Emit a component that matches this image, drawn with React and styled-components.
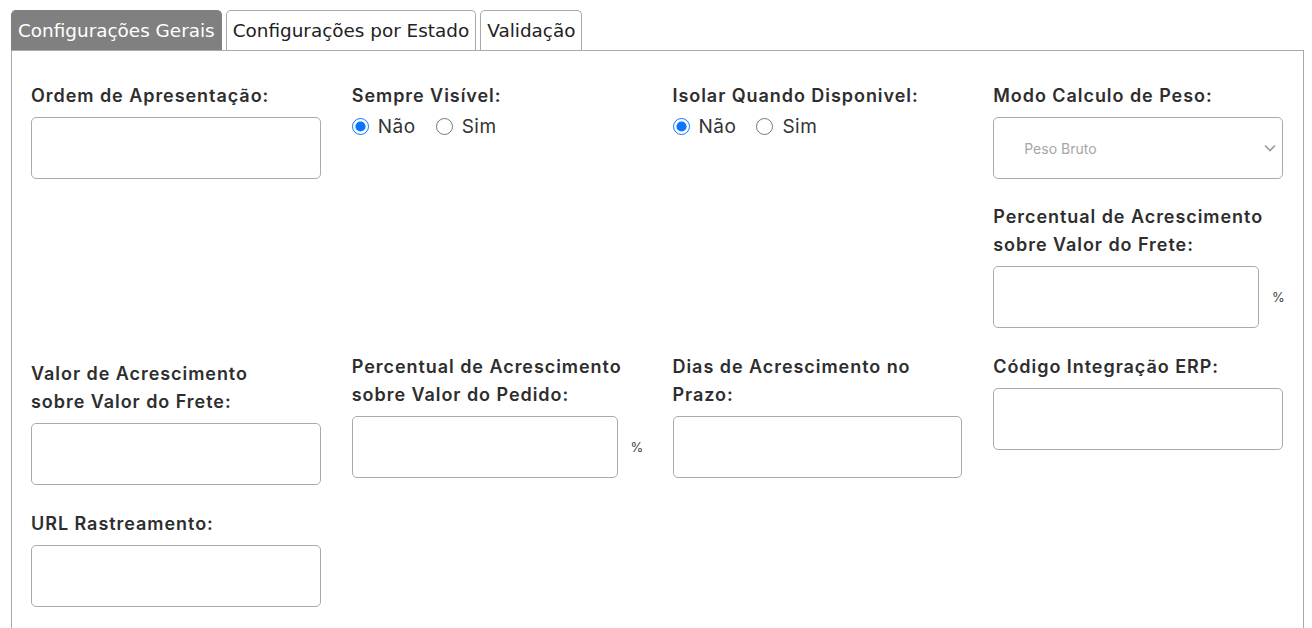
import React, { useState } from "react";
import styled, { createGlobalStyle } from "styled-components";

const GlobalStyle = createGlobalStyle`
  body {
    margin: 0;
    background: #ffffff;
    font-family: "Inter", "Liberation Sans", sans-serif;
  }
`;

const Page = styled.div`
  padding: 10px 8px 0 11px;
`;

const TabBar = styled.div`
  display: flex;
  gap: 4px;
  height: 40px;
`;

const Tab = styled.button`
  height: 40px;
  padding: 0 6px;
  border: 1px solid ${(p) => (p.$active ? "#808080" : "#aaaaaa")};
  border-bottom: none;
  border-radius: 5px 5px 0 0;
  background: ${(p) => (p.$active ? "#808080" : "#ffffff")};
  color: ${(p) => (p.$active ? "#ffffff" : "#222222")};
  font-family: "DejaVu Sans", Verdana, sans-serif;
  font-size: 18.4px;
  cursor: pointer;
`;

const Panel = styled.div`
  border: 1px solid #aaaaaa;
  border-bottom: none;
  height: 578px;
  padding: 31px 20px 0 19px;
  box-sizing: border-box;
`;

const Grid = styled.div`
  display: grid;
  grid-template-columns: repeat(4, 1fr);
  column-gap: 31px;
  row-gap: 25px;
  align-items: start;
`;

const Stack = styled.div`
  display: flex;
  flex-direction: column;
  gap: 24px;
`;

const Field = styled.div`
  display: flex;
  flex-direction: column;
  padding-top: ${(p) => p.$offset || 0}px;
`;

const Label = styled.label`
  font-size: 18px;
  font-weight: 600;
  letter-spacing: 0.95px;
  line-height: 28px;
  color: #2e2e2e;
  white-space: nowrap;
  margin-bottom: ${(p) => (p.$tight ? 2 : 7)}px;
`;

const TextInput = styled.input`
  height: 62px;
  width: 100%;
  box-sizing: border-box;
  border: 1px solid #aaaaaa;
  border-radius: 5px;
  padding: 0 12px;
  font-size: 15px;
  outline: none;
  background: #fff;
`;

const SuffixRow = styled.div`
  display: flex;
  align-items: center;
`;

const Suffix = styled.span`
  width: 24px;
  flex: none;
  padding-left: 13px;
  box-sizing: border-box;
  font-size: 13px;
  color: #444444;
`;

const SelectWrap = styled.div`
  position: relative;
`;

const Select = styled.select`
  appearance: none;
  width: 100%;
  height: 62px;
  border: 1px solid #aaaaaa;
  border-radius: 5px;
  background: #fff;
  padding: 0 0 0 30px;
  font-family: "Inter", sans-serif;
  font-size: 14px;
  color: #a6a6a6;
  outline: none;
`;

const Chevron = styled.svg`
  position: absolute;
  right: 7px;
  top: 27px;
  pointer-events: none;
`;

const RadioGroup = styled.div`
  display: flex;
  align-items: center;
  height: 28px;
  gap: 20px;
`;

const RadioOption = styled.label`
  display: flex;
  align-items: center;
  gap: 9px;
  font-size: 19px;
  letter-spacing: 0.5px;
  color: #333333;
  cursor: pointer;
`;

const Radio = styled.input`
  width: 17px;
  height: 17px;
  margin: 0;
  accent-color: #0a75ff;
`;

function RadioField({ label, name }) {
  const [value, setValue] = useState("nao");
  return (
    <Field>
      <Label $tight>{label}</Label>
      <RadioGroup>
        <RadioOption>
          <Radio type="radio" name={name} checked={value === "nao"} onChange={() => setValue("nao")} />
          Não
        </RadioOption>
        <RadioOption>
          <Radio type="radio" name={name} checked={value === "sim"} onChange={() => setValue("sim")} />
          Sim
        </RadioOption>
      </RadioGroup>
    </Field>
  );
}

function InputField({ label, suffix, offset }) {
  return (
    <Field $offset={offset}>
      <Label>{label}</Label>
      {suffix ? (
        <SuffixRow>
          <TextInput type="text" />
          <Suffix>{suffix}</Suffix>
        </SuffixRow>
      ) : (
        <TextInput type="text" />
      )}
    </Field>
  );
}

export default function App() {
  const [tab, setTab] = useState(0);
  const tabs = ["Configurações Gerais", "Configurações por Estado", "Validação"];

  return (
    <Page>
      <GlobalStyle />
      <TabBar>
        {tabs.map((t, i) => (
          <Tab key={t} $active={tab === i} onClick={() => setTab(i)}>
            {t}
          </Tab>
        ))}
      </TabBar>
      <Panel>
        <Grid>
          <InputField label="Ordem de Apresentação:" />
          <RadioField label="Sempre Visível:" name="visivel" />
          <RadioField label="Isolar Quando Disponivel:" name="isolar" />
          <Stack>
            <Field>
              <Label>Modo Calculo de Peso:</Label>
              <SelectWrap>
                <Select defaultValue="bruto">
                  <option value="bruto">Peso Bruto</option>
                  <option value="liquido">Peso Líquido</option>
                </Select>
                <Chevron width="12" height="8" viewBox="0 0 12 8">
                  <path d="M1 1.5l5 5 5-5" fill="none" stroke="#9a9a9a" strokeWidth="1.6" />
                </Chevron>
              </SelectWrap>
            </Field>
            <InputField
              label={<>Percentual de Acrescimento<br />sobre Valor do Frete:</>}
              suffix="%"
            />
          </Stack>

          <InputField
            label={<>Valor de Acrescimento<br />sobre Valor do Frete:</>}
            offset={7}
          />
          <InputField
            label={<>Percentual de Acrescimento<br />sobre Valor do Pedido:</>}
            suffix="%"
          />
          <InputField label={<>Dias de Acrescimento no<br />Prazo:</>} />
          <InputField label="Código Integração ERP:" />

          <InputField label="URL Rastreamento:" />
        </Grid>
      </Panel>
    </Page>
  );
}
